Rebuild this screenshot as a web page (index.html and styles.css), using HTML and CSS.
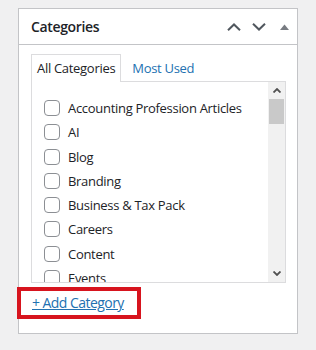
FILE: index.html
```html
<!DOCTYPE html>
<html>
<head>
<meta charset="utf-8">
<link rel="stylesheet" href="styles.css">
</head>
<body>
<div class="panel">
  <div class="panel-head">
    <h2 class="panel-title">Categories</h2>
    <div class="head-actions">
      <svg class="chev" width="14" height="8" viewBox="0 0 14 8"><path d="M1 7.2 L7 1.5 L13 7.2" fill="none" stroke="#50575e" stroke-width="2"/></svg>
      <svg class="chev" width="14" height="8" viewBox="0 0 14 8"><path d="M1 0.8 L7 6.5 L13 0.8" fill="none" stroke="#50575e" stroke-width="2"/></svg>
      <svg class="tri" width="9" height="6" viewBox="0 0 9 6"><polygon points="0,6 4.5,0.5 9,6" fill="#787c82"/></svg>
    </div>
  </div>
  <div class="panel-body">
    <ul class="tabs">
      <li class="tab active">All Categories</li>
      <li class="tab"><a href="#">Most Used</a></li>
    </ul>
    <div class="listbox">
      <ul class="checklist">
        <li><span class="cb"></span>Accounting Profession Articles</li>
        <li><span class="cb"></span>AI</li>
        <li><span class="cb"></span>Blog</li>
        <li><span class="cb"></span>Branding</li>
        <li><span class="cb"></span>Business &amp; Tax Pack</li>
        <li><span class="cb"></span>Careers</li>
        <li><span class="cb"></span>Content</li>
        <li><span class="cb"></span>Events</li>
        <li><span class="cb"></span>Finance</li>
      </ul>
      <div class="scrollbar">
        <div class="sb-btn"><svg width="8" height="5" viewBox="0 0 8 5"><path d="M0.5 4.5 L4 1 L7.5 4.5" fill="none" stroke="#505050" stroke-width="1.8"/></svg></div>
        <div class="sb-thumb"></div>
        <div class="sb-track"></div>
        <div class="sb-btn"><svg width="8" height="5" viewBox="0 0 8 5"><path d="M0.5 0.5 L4 4 L7.5 0.5" fill="none" stroke="#505050" stroke-width="1.8"/></svg></div>
      </div>
    </div>
    <div class="adder"><a href="#">+ Add Category</a></div>
  </div>
</div>
</body>
</html>
```
FILE: styles.css
```css
* { box-sizing: border-box; }
html, body { margin: 0; }
body {
  background: #f0f0f1;
  padding: 8px 18px 0 18px;
  font-family: "Open Sans", "Noto Sans", sans-serif;
  color: #1d2327;
  width: 316px;
  height: 350px;
  overflow: hidden;
}
.panel {
  width: 280px;
  height: 326px;
  background: #fff;
  border: 1px solid #c3c4c7;
  display: flex;
  flex-direction: column;
}
.panel-head {
  height: 36px;
  border-bottom: 1px solid #c3c4c7;
  display: flex;
  align-items: center;
  padding: 0 8px 0 12px;
}
.panel-title {
  margin: 0;
  font-size: 14px;
  font-weight: 600;
  flex: 1;
  letter-spacing: -0.35px;
}
.head-actions {
  display: flex;
  align-items: center;
}
.chev { display: block; margin-right: 11px; }
.chev + .chev { margin-right: 14px; }
.tri { display: block; }
.panel-body {
  padding: 9px 11px 0 12px;
}
.tabs {
  list-style: none;
  margin: 0;
  padding: 0;
  display: flex;
  gap: 5px;
  font-size: 13px;
}
.tab {
  height: 28px;
  line-height: 26px;
  padding: 0 5px;
  border: 1px solid transparent;
  border-bottom: none;
  margin-bottom: -1px;
  position: relative;
  z-index: 1;
  letter-spacing: -0.3px;
}
.tab.active {
  border-color: #dcdcde;
  background: #fff;
}
.tab a { color: #2271b1; text-decoration: none; }
.listbox {
  height: 202px;
  border: 1px solid #dcdcde;
  display: flex;
  overflow: hidden;
}
.checklist {
  list-style: none;
  margin: 0;
  padding: 14px 0 0 12px;
  flex: 1;
  font-size: 13px;
  overflow: hidden;
}
.checklist li {
  height: 24.25px;
  display: flex;
  align-items: center;
  white-space: nowrap;
  letter-spacing: -0.3px;
}
.cb {
  width: 16px;
  height: 16px;
  border: 1px solid #8c8f94;
  border-radius: 4px;
  margin-right: 8px;
  flex: none;
}
.scrollbar {
  width: 17px;
  background: #f1f1f1;
  display: flex;
  flex-direction: column;
}
.sb-btn {
  height: 17px;
  display: flex;
  align-items: center;
  justify-content: center;
}
.sb-thumb {
  height: 25px;
  margin: 0 1px;
  background: #c9c9c9;
}
.sb-track { flex: 1; }
.adder {
  align-self: flex-start;
  display: inline-block;
  margin: 8px 0 0 -10px;
  padding: 0 13px 0 11px;
  line-height: 24px;
  outline: 4px solid #d7141e;
  font-size: 14px;
}
.adder a { color: #2271b1; text-decoration: underline; letter-spacing: -0.55px; }
```
